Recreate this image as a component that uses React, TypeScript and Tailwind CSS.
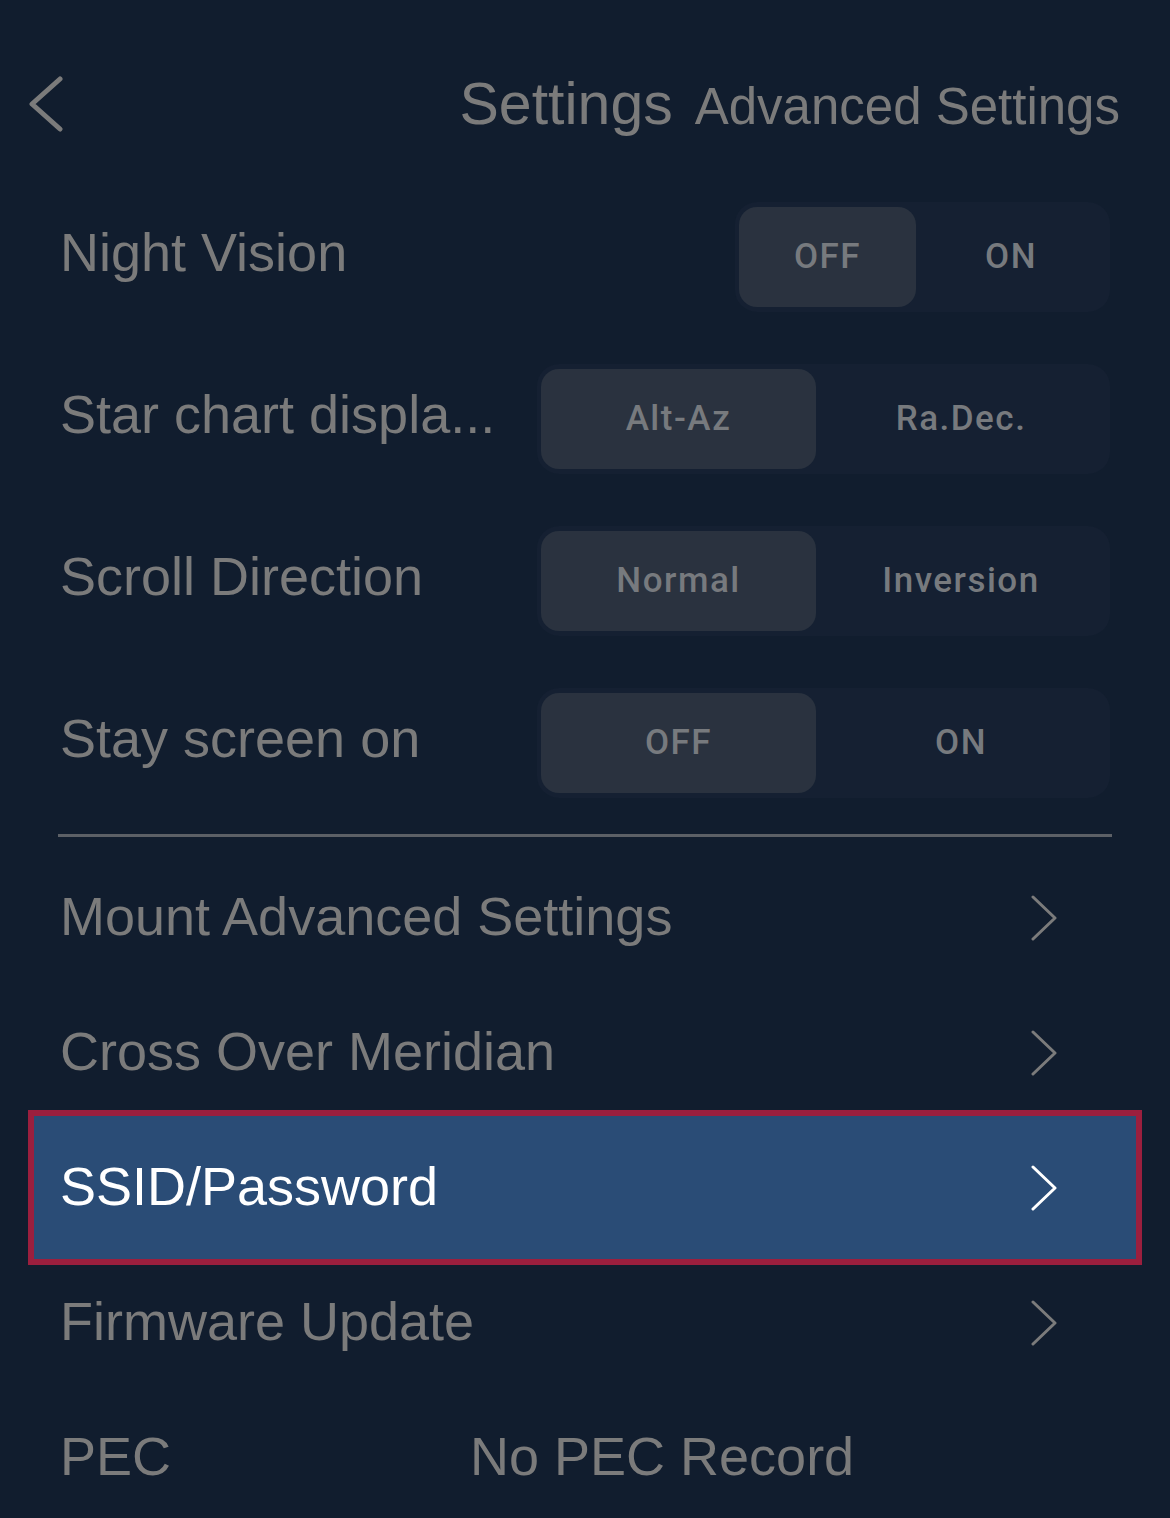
import React from 'react'

const labelFont = { fontFamily: '"Liberation Sans", Arial, sans-serif' }
const segFont = { fontFamily: 'Roboto, "Liberation Sans", sans-serif' }

function Chevron({ className }: { className?: string }) {
  return (
    <svg viewBox="0 0 26 46" className={className} fill="none">
      <polyline points="2,2 24,23 2,44" stroke="currentColor" strokeWidth="3" strokeLinecap="round" strokeLinejoin="round" />
    </svg>
  )
}

function Segmented({ left, right, wide }: { left: string; right: string; wide?: boolean }) {
  return (
    <div
      className={`flex h-[110px] items-center rounded-[22px] bg-[#152032] p-[4px] ${wide ? 'w-[573px]' : 'w-[375px]'}`}
    >
      <div
        className={`flex h-[100px] items-center justify-center rounded-[18px] bg-[#2a323f] text-[35px] font-medium tracking-[1.5px] text-[#777a7e] ${wide ? 'w-[275px]' : 'w-[177px]'}`}
        style={segFont}
      >
        {left}
      </div>
      <div className="flex flex-1 items-center justify-center text-[35px] font-medium tracking-[1.5px] text-[#777a7e]" style={segFont}>
        {right}
      </div>
    </div>
  )
}

function ToggleRow({ label, left, right, wide }: { label: string; left: string; right: string; wide?: boolean }) {
  return (
    <div className="flex h-[162px] items-center justify-between pl-[60px] pr-[60px]">
      <span className="-mt-[9px] text-[54px] text-[#7b7b7b]" style={labelFont}>
        {label}
      </span>
      <Segmented left={left} right={right} wide={wide} />
    </div>
  )
}

function LinkRow({ label }: { label: string }) {
  return (
    <div className="flex h-[135px] items-center justify-between pl-[60px] pr-[113px]">
      <span className="-mt-[2px] text-[54px] text-[#7b7b7b]" style={labelFont}>
        {label}
      </span>
      <Chevron className="h-[46px] w-[26px] text-[#7b7b7b]" />
    </div>
  )
}

export default function App() {
  return (
    <div className="min-h-screen w-full bg-[#111d2e]">
      {/* Header */}
      <div className="flex h-[176px] items-start justify-between pl-[28px] pr-[50px] pt-[76px]">
        <svg viewBox="0 0 36 56" className="h-[56px] w-[36px] text-[#7b7b7b]" fill="none">
          <polyline points="32,3 4,28 32,53" stroke="currentColor" strokeWidth="5" strokeLinecap="round" strokeLinejoin="round" />
        </svg>
        <div className="-mt-[16px] flex items-baseline gap-[22px] text-[#7b7b7b]" style={labelFont}>
          <span className="text-[59px]">Settings</span>
          <span className="text-[51px]">Advanced Settings</span>
        </div>
      </div>

      <ToggleRow label="Night Vision" left="OFF" right="ON" />
      <ToggleRow label="Star chart displa..." left="Alt-Az" right="Ra.Dec." wide />
      <ToggleRow label="Scroll Direction" left="Normal" right="Inversion" wide />
      <ToggleRow label="Stay screen on" left="OFF" right="ON" wide />

      <div className="mx-[58px] mt-[10px] h-[3px] bg-[#5c6066]" />

      <div className="mt-[13px]">
        <LinkRow label="Mount Advanced Settings" />
        <LinkRow label="Cross Over Meridian" />
        <div className="relative z-10 mx-[28px] -my-[10px] flex h-[155px] items-center justify-between border-[6px] border-[#9b1f3e] bg-[#2a4c76] pl-[26px] pr-[79px]">
          <span className="-mt-[2px] text-[54px] text-white" style={labelFont}>
            SSID/Password
          </span>
          <Chevron className="h-[46px] w-[26px] text-white" />
        </div>
        <LinkRow label="Firmware Update" />
        <div className="flex h-[135px] items-center pl-[60px]">
          <span className="-mt-[2px] w-[410px] text-[54px] text-[#7b7b7b]" style={labelFont}>
            PEC
          </span>
          <span className="-mt-[2px] text-[54px] text-[#7b7b7b]" style={labelFont}>
            No PEC Record
          </span>
        </div>
      </div>
    </div>
  )
}
